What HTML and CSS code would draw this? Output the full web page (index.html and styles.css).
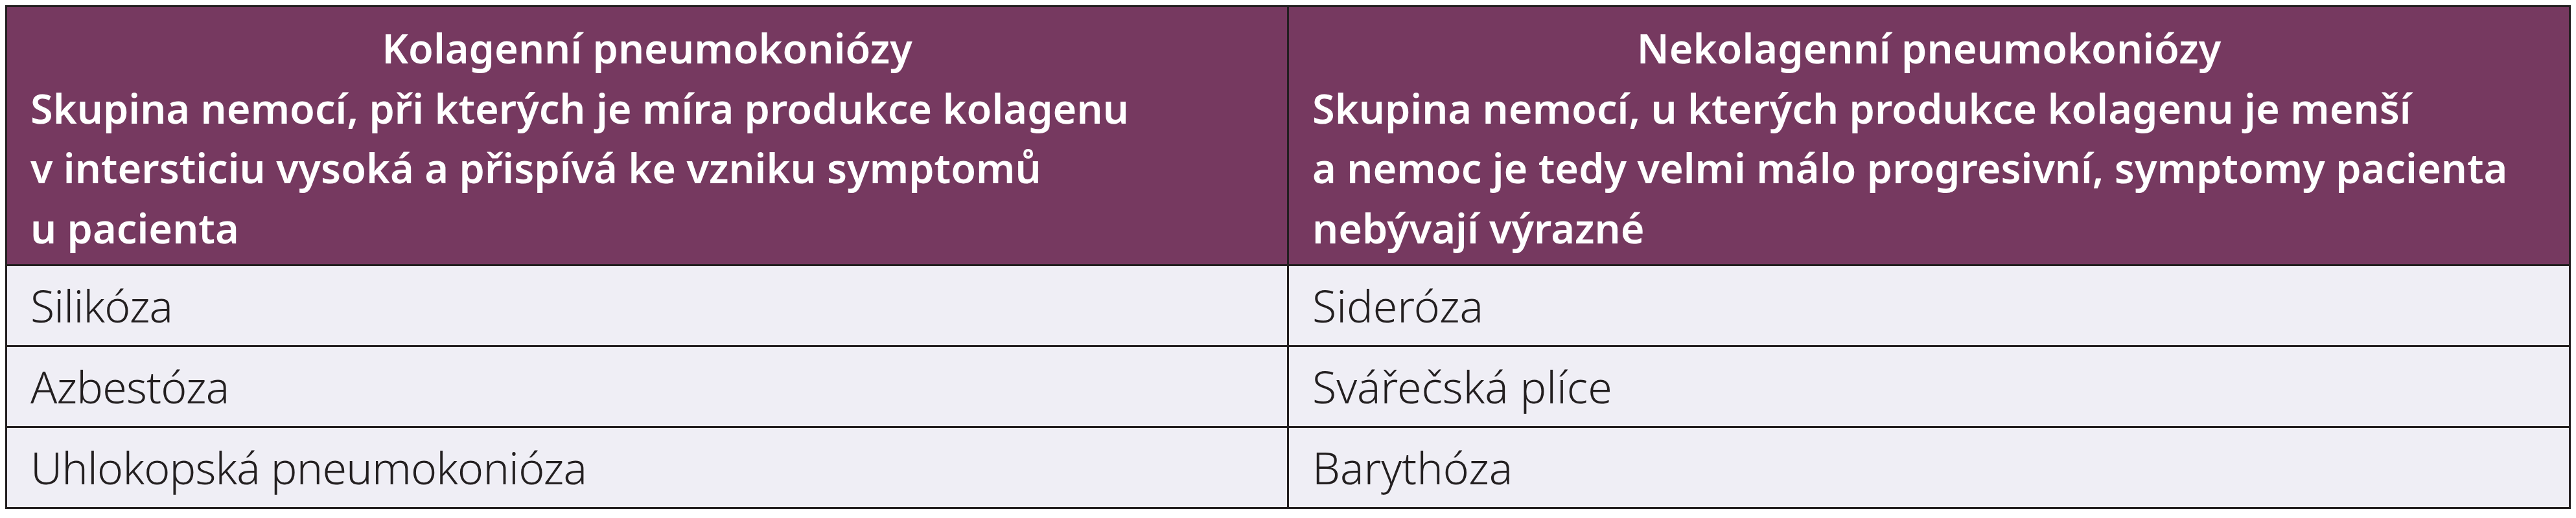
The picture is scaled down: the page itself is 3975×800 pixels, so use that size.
FILE: index.html
```html
<!DOCTYPE html>
<html lang="cs">
<head>
<meta charset="utf-8">
<title>Pneumokoniózy</title>
<link rel="stylesheet" href="styles.css">
</head>
<body>
<table class="pn-table">
  <thead>
    <tr>
      <th class="hcell">
        <div class="htitle">Kolagenní pneumokoniózy</div>
        <div class="hdesc">Skupina nemocí, při kterých je míra produkce kolagenu<br>v intersticiu vysoká a přispívá ke vzniku symptomů<br>u pacienta</div>
      </th>
      <th class="hcell">
        <div class="htitle">Nekolagenní pneumokoniózy</div>
        <div class="hdesc">Skupina nemocí, u kterých produkce kolagenu je menší<br>a nemoc je tedy velmi málo progresivní, symptomy pacienta<br>nebývají výrazné</div>
      </th>
    </tr>
  </thead>
  <tbody>
    <tr><td>Silikóza</td><td>Sideróza</td></tr>
    <tr><td>Azbestóza</td><td>Svářečská plíce</td></tr>
    <tr><td>Uhlokopská pneumokonióza</td><td>Barythóza</td></tr>
  </tbody>
</table>
</body>
</html>
```
FILE: styles.css
```css
body {
  margin: 8px;
  background: #ffffff;
}

.pn-table {
  width: 100%;
  border-collapse: collapse;
  table-layout: fixed;
  font-family: "Noto Sans", "Open Sans", sans-serif;
}

.hcell {
  background: #763960;
  color: #ffffff;
  font-weight: 600;
  font-size: 63px;
  line-height: 92.5px;
  text-align: left;
  vertical-align: top;
  padding: 17px 36px 10px;
  border: 3px solid #231f20;
  white-space: nowrap;
}

.htitle {
  text-align: center;
}

.pn-table td {
  background: #efeef5;
  color: #231f20;
  font-weight: 300;
  font-size: 68px;
  line-height: 80px;
  height: 122px;
  padding: 0 36px;
  border: 3px solid #231f20;
  vertical-align: middle;
  white-space: nowrap;
}

.pn-table td:first-child {
  letter-spacing: -0.8px;
}
```
